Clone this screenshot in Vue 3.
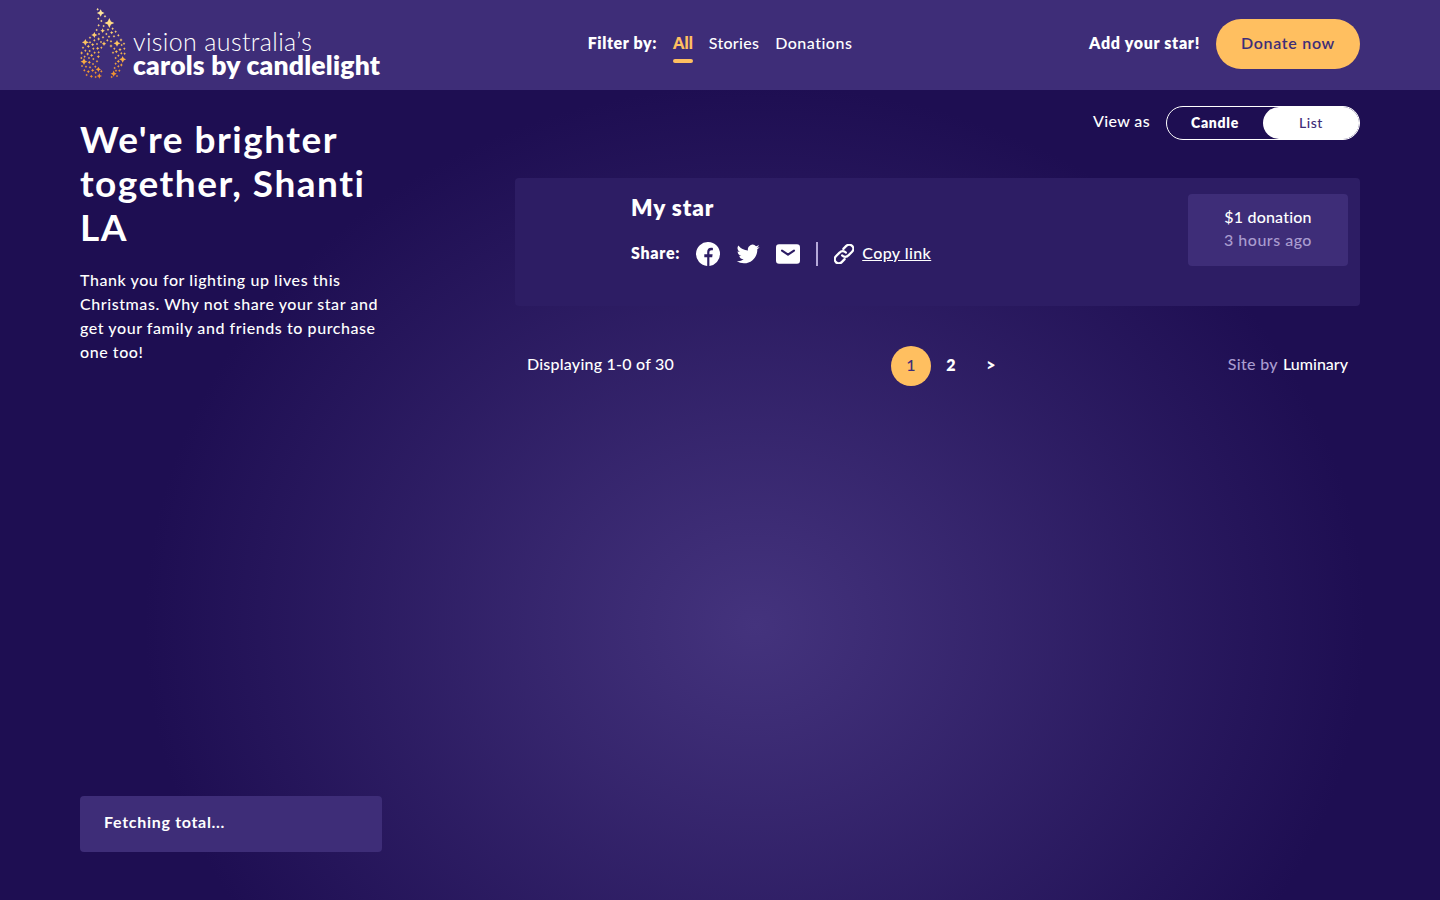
<script setup>
import { ref } from 'vue'

const filters = ['All', 'Stories', 'Donations']
const activeFilter = ref('All')

// Sparkles of the flame mark: [x, y, radius]
const sparkles = [
  [92, 39, 10], [118, 69, 13], [73, 105, 8], [46, 127, 9], [141, 130, 9], [42, 185, 9],
  [158, 178, 9], [102, 131, 6], [85, 208, 7], [131, 221, 8], [88, 228, 7], [98, 92, 6],
  [148, 212, 4], [83, 28, 4], [105, 49, 4], [85, 56, 4], [94, 63, 4], [86, 76, 4],
  [101, 78, 4], [128, 86, 4], [114, 89, 4], [80, 90, 4], [87, 102, 4], [125, 98, 5],
  [137, 95, 4], [109, 102, 4], [99, 112, 4], [117, 110, 4], [132, 109, 4], [145, 106, 4],
  [60, 113, 4], [86, 117, 5], [73, 121, 4], [60, 127, 4], [123, 124, 4], [112, 121, 4],
  [153, 120, 5], [68, 134, 5], [81, 132, 4], [93, 126, 4], [55, 139, 5], [39, 143, 4],
  [70, 146, 4], [83, 145, 5], [94, 143, 4], [123, 138, 5], [133, 146, 4], [155, 135, 4],
  [162, 131, 4], [46, 152, 4], [35, 159, 5], [59, 153, 4], [74, 158, 4], [86, 157, 4],
  [53, 162, 5], [65, 166, 5], [44, 170, 4], [139, 155, 5], [150, 149, 5], [163, 146, 4],
  [129, 158, 4], [154, 160, 4], [164, 161, 4], [145, 167, 4], [34, 174, 4], [57, 174, 4],
  [70, 177, 4], [85, 170, 5], [137, 174, 4], [81, 184, 4], [58, 187, 5], [69, 192, 4],
  [145, 184, 5], [137, 191, 4], [36, 198, 4], [48, 200, 4], [60, 202, 4], [76, 200, 4],
  [154, 195, 5], [145, 199, 4], [134, 204, 4], [43, 211, 4], [55, 215, 5], [68, 211, 5],
  [77, 218, 4], [94, 214, 4], [50, 225, 4], [64, 229, 5], [77, 231, 4], [138, 212, 4],
  [125, 231, 4], [141, 228, 4]
]
const star = ([x, y, size]) => {
  const r = size > 5 ? size * 1.15 : size
  const k = size > 5 ? r * 0.32 : r * 0.36
  return `M${x} ${y - r}L${x + k} ${y - k}L${x + r} ${y}L${x + k} ${y + k}L${x} ${y + r}L${x - k} ${y + k}L${x - r} ${y}L${x - k} ${y - k}Z`
}
const flame = sparkles.map(star).join('')
</script>

<template>
  <div class="page">
    <header class="header">
      <a class="logo">
        <svg class="flame" viewBox="30 24 141 213" width="47" height="71">
          <defs>
            <linearGradient id="glow" gradientUnits="userSpaceOnUse" x1="0" y1="24" x2="0" y2="237">
              <stop offset="0" stop-color="#ffeaa6" />
              <stop offset="0.3" stop-color="#ffd478" />
              <stop offset="0.65" stop-color="#fbb84e" />
              <stop offset="1" stop-color="#f08a28" />
            </linearGradient>
          </defs>
          <path :d="flame" fill="url(#glow)" />
        </svg>
        <span class="wordmark">
          <span class="thin">vision australia’s</span>
          <span class="bold">carols by candlelight</span>
        </span>
      </a>
      <nav class="filters">
        <strong class="filter-label">Filter by:</strong>
        <a
          v-for="f in filters"
          :key="f"
          class="filter"
          :class="[f.toLowerCase(), { active: f === activeFilter }]"
          @click="activeFilter = f"
        >{{ f }}</a>
      </nav>
      <div class="actions">
        <strong class="add">Add your star!</strong>
        <button class="donate">Donate now</button>
      </div>
    </header>

    <div class="body">
      <aside class="side">
        <h1>We're brighter together, Shanti LA</h1>
        <p class="intro">Thank you for lighting up lives this Christmas. Why not share your star and get your family and friends to purchase one too!</p>
        <div class="total">Fetching total...</div>
      </aside>

      <main class="main">
        <div class="view">
          <span class="view-label">View as</span>
          <div class="toggle">
            <button class="option candle">Candle</button>
            <button class="option list">List</button>
          </div>
        </div>

        <article class="card">
          <div class="info">
            <h2>My star</h2>
            <div class="share">
              <strong class="share-label">Share:</strong>
              <svg class="icon" viewBox="0 0 24 24" width="24" height="24">
                <path fill="#fff" d="M24 12A12 12 0 1 0 11.2 23.97V15.2H8.3V12.2H11.2V10C11.2 7.2 12.7 5.7 15 5.7C16 5.7 16.9 5.9 16.9 5.9V8.2H15.6C14.2 8.2 13.4 8.9 13.4 10.2V12.2H16.6L16.2 15.2H13.4V23.92A12 12 0 0 0 24 12Z" />
              </svg>
              <svg class="icon" viewBox="0 0 24 24" width="24" height="24">
                <path fill="#fff" d="M23.64 4.94c-.84.37-1.75.62-2.7.74a4.7 4.7 0 0 0 2.06-2.6c-.9.54-1.92.93-2.98 1.14a4.7 4.7 0 0 0-8.02 4.28A13.35 13.35 0 0 1 2.3 3.6a4.7 4.7 0 0 0 1.46 6.28 4.68 4.68 0 0 1-2.13-.59v.06a4.7 4.7 0 0 0 3.77 4.6 4.7 4.7 0 0 1-2.12.08 4.7 4.7 0 0 0 4.39 3.27A9.44 9.44 0 0 1 .7 19.24a13.3 13.3 0 0 0 7.21 2.11c8.65 0 13.38-7.17 13.38-13.38l-.02-.6a9.5 9.5 0 0 0 2.37-2.43Z" />
              </svg>
              <svg class="icon" viewBox="0 0 24 24" width="24" height="24">
                <rect x="0" y="2.3" width="24" height="19.4" rx="3" fill="#fff" />
                <path d="M6 8.6L12 12.6L18 8.6" fill="none" stroke="#2d1d64" stroke-width="2.2" stroke-linecap="round" stroke-linejoin="round" />
              </svg>
              <span class="rule"></span>
              <a class="copy">
                <svg viewBox="1 1 22 22" width="20" height="20" fill="none" stroke="#fff" stroke-width="2.5" stroke-linecap="round" stroke-linejoin="round">
                  <path d="M10 13.6a4.6 4.6 0 0 0 6.9-.1l4-4a4.4 4.4 0 0 0-6.4-6.4l-3.2 3.3" />
                  <path d="M14 10.4a4.6 4.6 0 0 0-6.9.1l-4 4a4.4 4.4 0 0 0 6.4 6.4l3.2-3.3" />
                </svg>
                <span class="copy-text">Copy link</span>
              </a>
            </div>
          </div>
          <div class="amount">
            <span class="sum">$1 donation</span>
            <span class="ago">3 hours ago</span>
          </div>
        </article>

        <footer class="pager">
          <span class="showing">Displaying 1-0 of 30</span>
          <div class="pages">
            <a class="num current">1</a>
            <a class="num">2</a>
            <a class="num">&gt;</a>
          </div>
          <span class="credit"><span class="by">Site by</span><a class="lum">Luminary</a></span>
        </footer>
      </main>
    </div>
  </div>
</template>

<style>
body {
  background: #1e0e52;
}
</style>

<style scoped>
.page {
  box-sizing: border-box;
  display: flex;
  flex-direction: column;
  height: 900px;
  overflow: hidden;
  color: #fff;
  font: 500 16px/24px Lato, "Open Sans", sans-serif;
  font-variant-ligatures: none;
  background: radial-gradient(ellipse 610px 540px at 755px 625px, #44337d 0%, #1e0e52 100%) #1e0e52;
}
h1, h2, p { margin: 0; }
button { border: 0; font-family: inherit; color: inherit; }
strong { font-weight: 800; }

.header {
  flex: none;
  box-sizing: border-box;
  height: 90px;
  padding: 0 80px;
  display: grid;
  grid-template-columns: 1fr auto 1fr;
  align-items: center;
  background: #3e2d78;
}
.logo { display: flex; align-items: flex-start; gap: 6px; height: 74px; }
.flame { flex: none; }
.wordmark { display: flex; flex-direction: column; padding-top: 21px; white-space: nowrap; }
.thin { font-size: 25px; line-height: 25px; font-weight: 300; letter-spacing: 0.37px; }
.bold { font-size: 26.5px; line-height: 23px; font-weight: 800; letter-spacing: 0.22px; }

.filters { display: flex; gap: 16px; padding-bottom: 5px; }
.filter-label { letter-spacing: 0.6px; }
.filter { position: relative; }
.stories { letter-spacing: 0.28px; }
.donations { letter-spacing: 0.5px; }
.filter.active { color: #ffbf60; font-weight: 800; }
.filter.active::after {
  content: "";
  position: absolute;
  left: 0;
  right: 0;
  bottom: -8px;
  height: 4px;
  border-radius: 2px;
  background: #ffbf60;
}
.actions { display: flex; align-items: center; justify-content: flex-end; gap: 16px; padding-bottom: 3px; }
.add { letter-spacing: 0.68px; padding-bottom: 2px; }
.donate {
  width: 144px;
  height: 50px;
  border-radius: 25px;
  background: #ffbf60;
  color: #3e2d78;
  font-size: 16px;
  font-weight: 600;
  letter-spacing: 0.7px;
  padding: 0 0 2px;
}

.body { flex: 1; display: flex; justify-content: space-between; padding: 0 80px 48px; }
.side { width: 302px; display: flex; flex-direction: column; padding-top: 27px; }
h1 { font-size: 37px; line-height: 44px; font-weight: 700; letter-spacing: 1.5px; }
.intro { margin-top: 19px; letter-spacing: 0.57px; }
.total {
  margin-top: auto;
  height: 56px;
  box-sizing: border-box;
  padding: 14px 24px;
  border-radius: 4px;
  background: #3e2d78;
  font-weight: 700;
  letter-spacing: 0.7px;
}

.main { width: 845px; padding-top: 16px; }
.view { display: flex; justify-content: flex-end; align-items: center; gap: 16px; height: 34px; }
.view-label { letter-spacing: 0.36px; padding-bottom: 4px; }
.toggle { box-sizing: border-box; width: 194px; height: 34px; border: 1px solid #fff; border-radius: 17px; display: flex; }
.option { flex: 1; padding: 0 0 2px; background: none; font-size: 14px; }
.candle { font-weight: 800; letter-spacing: 0.73px; }
.list { background: #fff; color: #3e2d78; border-radius: 16px; font-weight: 500; letter-spacing: 0.5px; }

.card {
  margin-top: 38px;
  height: 128px;
  box-sizing: border-box;
  padding: 16px 12px 16px 116px;
  border-radius: 4px;
  background: #2d1d64;
  display: flex;
  justify-content: space-between;
  align-items: flex-start;
}
h2 { font-size: 22.5px; line-height: 28px; font-weight: 800; letter-spacing: 0.9px; }
.share { display: flex; align-items: center; gap: 16px; margin-top: 20px; height: 24px; }
.share-label { letter-spacing: 0.7px; padding-bottom: 2px; }
.rule { width: 2px; height: 24px; background: #b5a9d9; }
.copy { display: flex; align-items: center; gap: 8px; }
.copy-text { text-decoration: underline; letter-spacing: 0.42px; padding-bottom: 2px; }
.amount {
  width: 160px;
  height: 72px;
  box-sizing: border-box;
  padding-top: 11px;
  border-radius: 4px;
  background: #3e2d78;
  display: flex;
  flex-direction: column;
  align-items: center;
}
.sum { letter-spacing: 0.2px; }
.ago { letter-spacing: 0.5px; margin-top: -1px; }
.ago, .by { color: #a99ccf; }

.pager { display: flex; justify-content: space-between; align-items: center; margin-top: 40px; padding: 0 12px; height: 40px; }
.showing { letter-spacing: 0.23px; padding-bottom: 4px; }
.pages { display: flex; }
.num { width: 40px; height: 40px; line-height: 38px; text-align: center; border-radius: 50%; font-weight: 800; }
.current { background: #ffbf60; color: #3e2d78; font-weight: 500; }
.credit { display: flex; gap: 5px; padding-bottom: 4px; }
.by { letter-spacing: 0.35px; }
</style>
